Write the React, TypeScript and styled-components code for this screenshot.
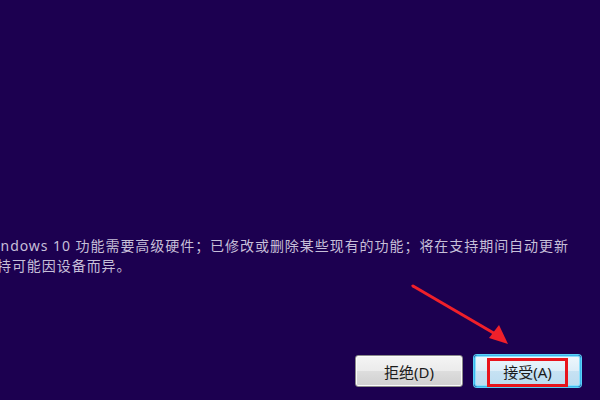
import React from 'react'
import styled, { createGlobalStyle } from 'styled-components'

const GlobalStyle = createGlobalStyle`
	html, body {
		margin: 0;
		padding: 0;
		background: #1c0050;
	}
	body {
		font-family: "Noto Sans", "Noto Sans CJK SC", sans-serif;
	}
`

const Screen = styled.div`
	position: relative;
	width: 600px;
	height: 400px;
	overflow: hidden;
	background: #1c0050;
	display: flex;
	flex-direction: column;
`

const Notice = styled.div`
	margin: 236px 0 0 -18px;
	color: #c6bfd8;
	font-size: 14px;
	letter-spacing: 0.95px;
	line-height: 20px;
`

const Line = styled.div`
	white-space: nowrap;
`

const Actions = styled.div`
	margin-top: auto;
	display: flex;
	justify-content: flex-end;
	gap: 11px;
	padding: 0 19px 13px 0;
`

const Button = styled.button<{ $focused?: boolean }>`
	position: relative;
	width: ${({ $focused }) => ($focused ? '107px' : '108px')};
	height: 32px;
	padding: 0;
	border-radius: 3px;
	font-family: "Noto Sans", "Noto Sans CJK SC", sans-serif;
	font-size: 15px;
	color: #1a1a1a;
	cursor: pointer;
	border: 1px solid ${({ $focused }) => ($focused ? '#3cb8ec' : '#8a8a8a')};
	background: ${({ $focused }) =>
		$focused
			? 'linear-gradient(#eef7fc 0%, #dcedf8 50%, #c6e2f3 51%, #bcdcf0 100%)'
			: 'linear-gradient(#f4f4f4 0%, #ebebeb 50%, #dddddd 51%, #d0d0d0 100%)'};
	box-shadow: ${({ $focused }) =>
		$focused
			? 'inset 0 0 0 1px #8fe0fb, 0 0 0 1px #5ad0f7'
			: 'inset 0 0 0 1px #fbfbfb'};
`

const Highlight = styled.span`
	position: absolute;
	left: 12px;
	right: 12px;
	top: 2px;
	bottom: -1px;
	border: 3px solid #e8141c;
	pointer-events: none;
`

const Pointer = styled.svg`
	position: absolute;
	left: 0;
	top: 0;
	pointer-events: none;
`

const App = () => (
	<>
		<GlobalStyle />
		<Screen>
			<Notice>
				<Line>Windows 10 功能需要高级硬件；已修改或删除某些现有的功能；将在支持期间自动更新</Line>
				<Line>支持可能因设备而异。</Line>
			</Notice>
			<Actions>
				<Button>拒绝(D)</Button>
				<Button $focused>
					接受(A)
					<Highlight />
				</Button>
			</Actions>
			<Pointer width="600" height="400" viewBox="0 0 600 400">
				<line x1="413" y1="286" x2="497" y2="335" stroke="#f0202a" strokeWidth="3" strokeLinecap="round" />
				<polygon points="508,344 489,338 499,325" fill="#f0202a" />
			</Pointer>
		</Screen>
	</>
)

export default App
